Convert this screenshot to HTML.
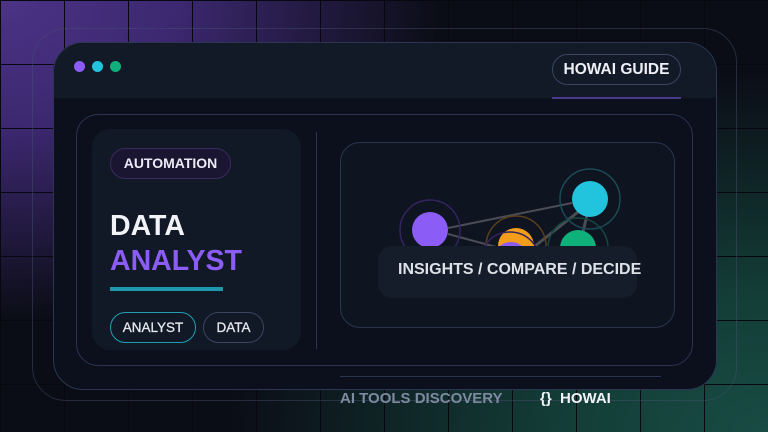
<!DOCTYPE html>
<html><head><meta charset="utf-8"><style>
*{margin:0;padding:0;box-sizing:border-box}
body{width:768px;height:432px;overflow:hidden;font-family:"Liberation Sans",sans-serif;font-weight:bold;position:relative;
background:radial-gradient(ellipse 440px 320px at 0px 0px,#4c3386 0%,#3c2870 40%,rgba(20,15,35,0) 100%),radial-gradient(ellipse 540px 360px at 768px 432px,#184c44 0%,#133c37 40%,rgba(10,20,25,0) 100%),#0b0d16}
.grid{position:absolute;inset:0;background-image:linear-gradient(to right,#07080f 1px,transparent 1px),linear-gradient(to bottom,#07080f 1px,transparent 1px);background-size:64px 64px}
.abs{position:absolute;white-space:nowrap}
</style></head><body>
<div class="grid"></div>
<div class="abs" style="left:32px;top:28px;width:705px;height:373px;border:1px solid rgba(70,80,110,.45);border-radius:34px"></div>
<div class="abs" style="left:53px;top:42px;width:664px;height:348px;border-radius:30px;background:#0b101c;border:1px solid #2c3652;overflow:hidden">
 <div class="abs" style="left:0;top:0;right:0;height:55px;background:#121a27"></div>
</div>
<div class="abs" style="left:74px;top:61px;width:11px;height:11px;border-radius:50%;background:#8b5cf6"></div>
<div class="abs" style="left:92px;top:61px;width:11px;height:11px;border-radius:50%;background:#22c3dc"></div>
<div class="abs" style="left:110px;top:61px;width:11px;height:11px;border-radius:50%;background:#10b07a"></div>
<div class="abs" style="left:552px;top:54px;width:129px;height:31px;border:1px solid #3a4560;border-radius:16px;color:#eef0f5;font-size:15.5px;line-height:29px;text-align:center">HOWAI GUIDE</div>
<div class="abs" style="left:552px;top:97px;width:129px;height:2px;background:#4a3a8a"></div>
<div class="abs" style="left:76px;top:114px;width:617px;height:252px;border:1px solid #2a3550;border-radius:22px"></div>
<div class="abs" style="left:92px;top:129px;width:209px;height:221px;background:#111926;border-radius:18px"></div>
<div class="abs" style="left:110px;top:148px;width:121px;height:31px;background:#1a1530;border:1px solid #3a2a60;border-radius:16px;color:#eceaf5;font-size:14px;line-height:29px;text-align:center">AUTOMATION</div>
<div class="abs" style="left:110px;top:210px;font-size:28.5px;color:#f1f3f7;line-height:32px">DATA</div>
<div class="abs" style="left:110px;top:245px;font-size:28.5px;color:#8b5cf6;line-height:32px">ANALYST</div>
<div class="abs" style="left:110px;top:287px;width:113px;height:4px;background:#1e98ad"></div>
<div class="abs" style="left:110px;top:312px;width:86px;height:31px;border:1px solid #1f9fb0;border-radius:16px;color:#e6e8ee;font-size:13.5px;font-weight:normal;line-height:29px;text-align:center;-webkit-text-stroke:.3px #e6e8ee">ANALYST</div>
<div class="abs" style="left:203px;top:312px;width:61px;height:31px;border:1px solid #3a4560;border-radius:16px;color:#e6e8ee;font-size:13.5px;font-weight:normal;line-height:29px;text-align:center;-webkit-text-stroke:.3px #e6e8ee">DATA</div>
<div class="abs" style="left:316px;top:132px;width:1px;height:217px;background:#2a3550"></div>
<div class="abs" style="left:340px;top:142px;width:335px;height:186px;border:1px solid #2a3550;border-radius:20px;background:#0e1420"></div>
<svg class="abs" style="left:0;top:0" width="768" height="432">
 <line x1="448" y1="228" x2="572" y2="203" stroke="#4a4d55" stroke-width="2"/>
 <line x1="448" y1="234" x2="500" y2="248" stroke="#4a4d55" stroke-width="2"/>
 <line x1="530" y1="250" x2="578" y2="212" stroke="#4a4d55" stroke-width="3"/>
 <line x1="587" y1="215" x2="583" y2="232" stroke="#4a4d55" stroke-width="3"/>
 <circle cx="430" cy="230" r="30" fill="none" stroke="#35245f" stroke-width="1.5"/>
 <circle cx="430" cy="230" r="18" fill="#8b5cf6"/>
 <circle cx="516" cy="246" r="30" fill="none" stroke="#5a3f1e" stroke-width="1.5"/>
 <circle cx="578" cy="248" r="30" fill="none" stroke="#17473f" stroke-width="1.5"/>
 <circle cx="516" cy="246" r="18" fill="#f29e1a"/>
 <circle cx="510" cy="262" r="30" fill="none" stroke="#35245f" stroke-width="1.5"/>
 <circle cx="511" cy="260" r="18" fill="#8b5cf6"/>
 <circle cx="578" cy="248" r="18" fill="#10b07a"/>
 <circle cx="590" cy="199" r="30" fill="none" stroke="#1a4a55" stroke-width="1.5"/>
 <circle cx="590" cy="199" r="18" fill="#22c3dc"/>
</svg>
<div class="abs" style="left:378px;top:246px;width:259px;height:52px;background:#151d2a;border-radius:14px;color:#dde1e8;font-size:16px;line-height:48px;padding-left:20px">INSIGHTS / COMPARE / DECIDE</div>
<div class="abs" style="left:340px;top:376px;width:321px;height:1px;background:#2a3550"></div>
<div class="abs" style="left:340px;top:390px;font-size:15px;color:#7d8aa0">AI TOOLS DISCOVERY</div>
<div class="abs" style="left:540px;top:390px;font-size:15px;color:#f1f3f7">{}&nbsp; HOWAI</div>
</body></html>
